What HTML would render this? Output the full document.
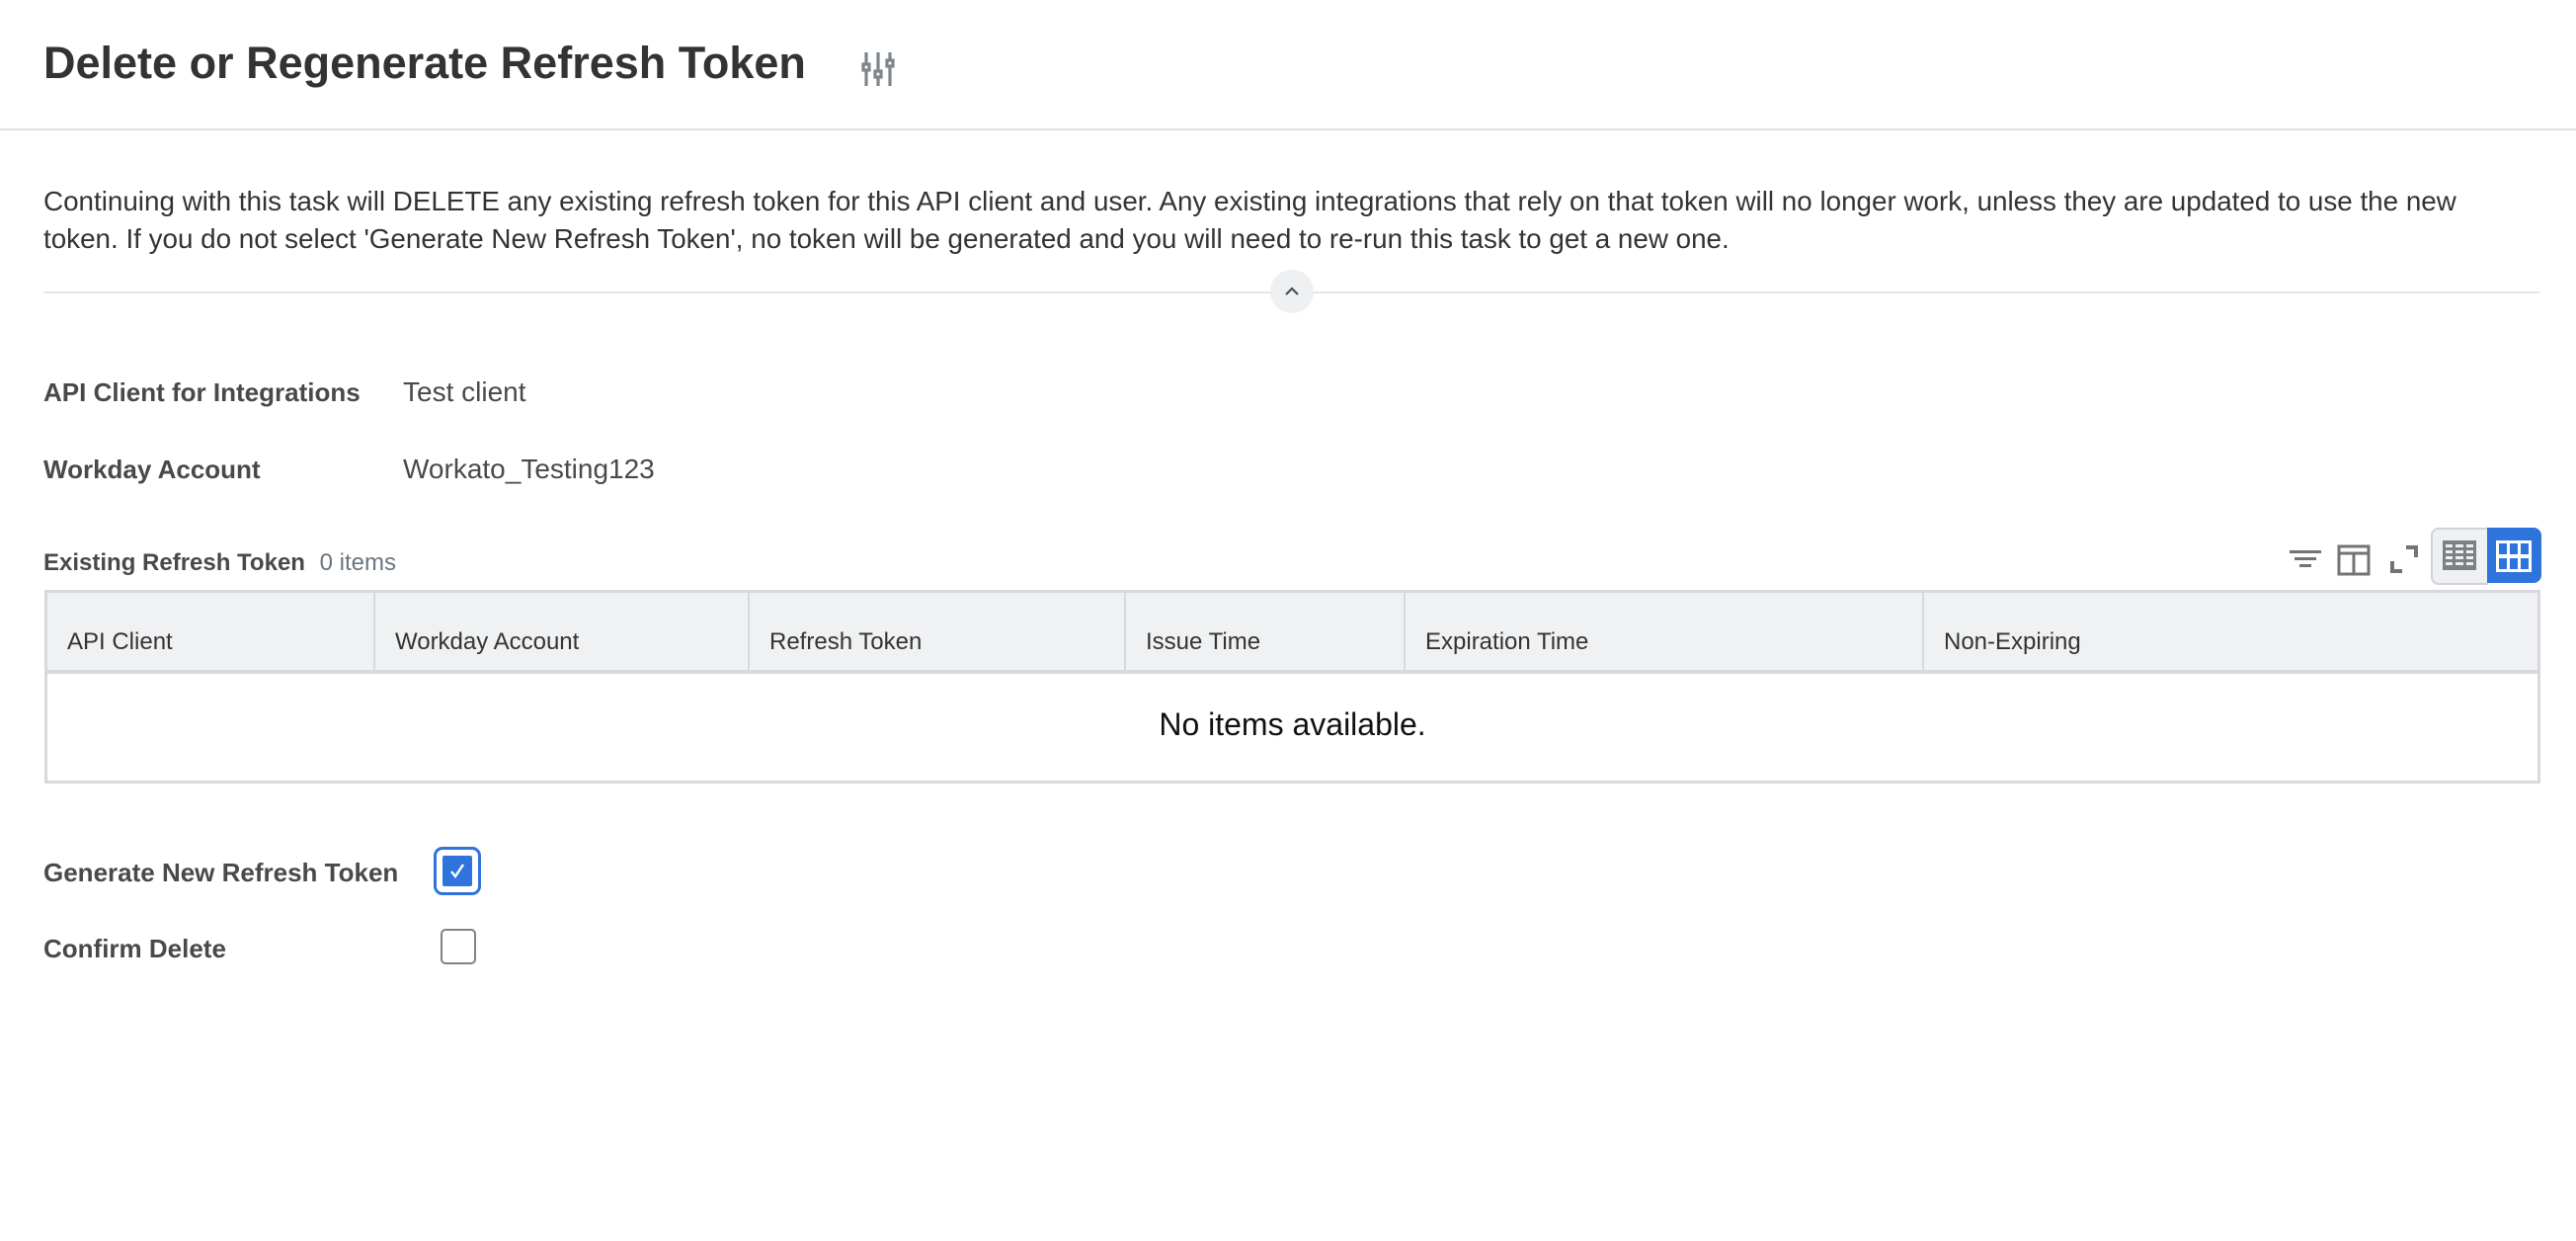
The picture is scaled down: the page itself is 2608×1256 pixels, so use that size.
<!DOCTYPE html>
<html><head><meta charset="utf-8"><style>
body{margin:0;width:2608px;height:1256px;background:#fff;font-family:"Liberation Sans",sans-serif;color:#333;position:relative;overflow:hidden}
.a{position:absolute;white-space:nowrap}
.lbl{font-size:26px;color:#494949;font-weight:bold}
.th{position:absolute;top:0;height:78px;line-height:100px;font-size:24px;color:#333;border-right:2px solid #d7d9dc;box-sizing:border-box;padding-left:20px}
</style></head><body>
<div class="a" style="left:44px;top:38px;font-size:45px;font-weight:bold;color:#333">Delete or Regenerate Refresh Token</div>
<svg class="a" style="left:872px;top:52px" width="34" height="36" viewBox="0 0 34 36" fill="none" stroke="#7f858c" stroke-width="3.2">
<line x1="5" y1="1" x2="5" y2="12"/><rect x="2" y="13" width="6" height="6"/><line x1="5" y1="20" x2="5" y2="35"/>
<line x1="17" y1="1" x2="17" y2="19"/><rect x="14" y="20" width="6" height="6"/><line x1="17" y1="27" x2="17" y2="35"/>
<line x1="29" y1="1" x2="29" y2="8"/><rect x="26" y="9" width="6" height="6"/><line x1="29" y1="16" x2="29" y2="35"/>
</svg>
<div class="a" style="left:0;top:130px;width:2608px;height:2px;background:#dde1e5"></div>
<div class="a" style="left:44px;top:185px;font-size:27.8px;line-height:38px;color:#333">Continuing with this task will DELETE any existing refresh token for this API client and user. Any existing integrations that rely on that token will no longer work, unless they are updated to use the new<br>token. If you do not select 'Generate New Refresh Token', no token will be generated and you will need to re-run this task to get a new one.</div>
<div class="a" style="left:44px;top:295px;width:2527px;height:2px;background:#e3e6ea"></div>
<div class="a" style="left:1286px;top:273px;width:44px;height:44px;border-radius:50%;background:#eef0f2"></div>
<svg class="a" style="left:1298px;top:285px" width="20" height="20" viewBox="0 0 20 20"><path d="M4 13 L10 7 L16 13" fill="none" stroke="#4a4f55" stroke-width="2.2"/></svg>
<div class="a lbl" style="left:44px;top:382px">API Client for Integrations</div>
<div class="a" style="left:408px;top:381px;font-size:28px;color:#494949">Test client</div>
<div class="a lbl" style="left:44px;top:460px">Workday Account</div>
<div class="a" style="left:408px;top:459px;font-size:28px;color:#494949">Workato_Testing123</div>
<div class="a" style="left:44px;top:556px;font-size:24px;color:#494949;font-weight:bold">Existing Refresh Token <span style="font-weight:normal;color:#6b7580;font-size:24px;margin-left:8px">0 items</span></div>
<svg class="a" style="left:2316px;top:552px" width="36" height="30" viewBox="0 0 36 30" fill="#737373"><rect x="2" y="5" width="32" height="3"/><rect x="7" y="12" width="22" height="3"/><rect x="12" y="19" width="12" height="3"/></svg>
<svg class="a" style="left:2366px;top:550px" width="34" height="34" viewBox="0 0 34 34" fill="none" stroke="#737373" stroke-width="3"><rect x="2" y="3" width="30" height="28"/><line x1="2" y1="10" x2="32" y2="10"/><line x1="17" y1="10" x2="17" y2="31"/></svg>
<svg class="a" style="left:2418px;top:550px" width="32" height="32" viewBox="0 0 32 32" fill="none" stroke="#737373" stroke-width="4"><path d="M18 4 H28 V14"/><path d="M4 18 V28 H14"/></svg>
<div class="a" style="left:2461px;top:534px;width:56px;height:54px;border:2px solid #d0d3d7;border-right:none;border-radius:8px 0 0 8px;background:#eef0f2"></div>
<svg class="a" style="left:2473px;top:547px" width="34" height="30" viewBox="0 0 34 30"><rect x="0" y="0" width="34" height="30" fill="#7c8187"/><g fill="#eef0f2"><rect x="3" y="4" width="7" height="3"/><rect x="13" y="4" width="8" height="3"/><rect x="24" y="4" width="7" height="3"/><rect x="3" y="10" width="7" height="3"/><rect x="13" y="10" width="8" height="3"/><rect x="24" y="10" width="7" height="3"/><rect x="3" y="16" width="7" height="3"/><rect x="13" y="16" width="8" height="3"/><rect x="24" y="16" width="7" height="3"/><rect x="3" y="22" width="7" height="3"/><rect x="13" y="22" width="8" height="3"/><rect x="24" y="22" width="7" height="3"/></g></svg>
<div class="a" style="left:2518px;top:534px;width:55px;height:56px;background:#2f73dd;border-radius:0 8px 8px 0"></div>
<svg class="a" style="left:2527px;top:547px" width="36" height="32" viewBox="0 0 36 32"><rect width="36" height="32" fill="#fff"/><g fill="#2f73dd"><rect x="3" y="3" width="8" height="11"/><rect x="14" y="3" width="8" height="11"/><rect x="25" y="3" width="8" height="11"/><rect x="3" y="18" width="8" height="11"/><rect x="14" y="18" width="8" height="11"/><rect x="25" y="18" width="8" height="11"/></g></svg>
<div class="a" style="left:45px;top:597px;width:2527px;height:196px;border:3px solid #d7d9dc;box-sizing:border-box;background:#fff">
<div class="a" style="left:0;top:0;width:2521px;height:78px;background:#f0f1f3;border-bottom:4px solid #d7d9dc"></div>
<div class="th" style="left:0;width:332px">API Client</div>
<div class="th" style="left:332px;width:379px">Workday Account</div>
<div class="th" style="left:711px;width:381px">Refresh Token</div>
<div class="th" style="left:1092px;width:283px">Issue Time</div>
<div class="th" style="left:1375px;width:525px">Expiration Time</div>
<div class="th" style="left:1900px;width:621px;border-right:none">Non-Expiring</div>
<div class="a" style="left:0;top:115px;width:2521px;text-align:center;font-size:32px;color:#111">No items available.</div>
</div>
<div class="a lbl" style="left:44px;top:868px">Generate New Refresh Token</div>
<div class="a" style="left:439px;top:857px;width:48px;height:49px;border:3px solid #2f73dd;border-radius:9px;box-sizing:border-box"></div>
<div class="a" style="left:446px;top:864px;width:34px;height:35px;background:#2f73dd;border-radius:4px;border:2px solid #fff;box-sizing:border-box"></div>
<svg class="a" style="left:451px;top:870px" width="24" height="24" viewBox="0 0 24 24"><path d="M6 12 L10 17 L18 5" fill="none" stroke="#fff" stroke-width="2.4"/></svg>
<div class="a lbl" style="left:44px;top:945px">Confirm Delete</div>
<div class="a" style="left:446px;top:940px;width:36px;height:36px;border:2px solid #7d848b;border-radius:5px;box-sizing:border-box"></div>
</body></html>
